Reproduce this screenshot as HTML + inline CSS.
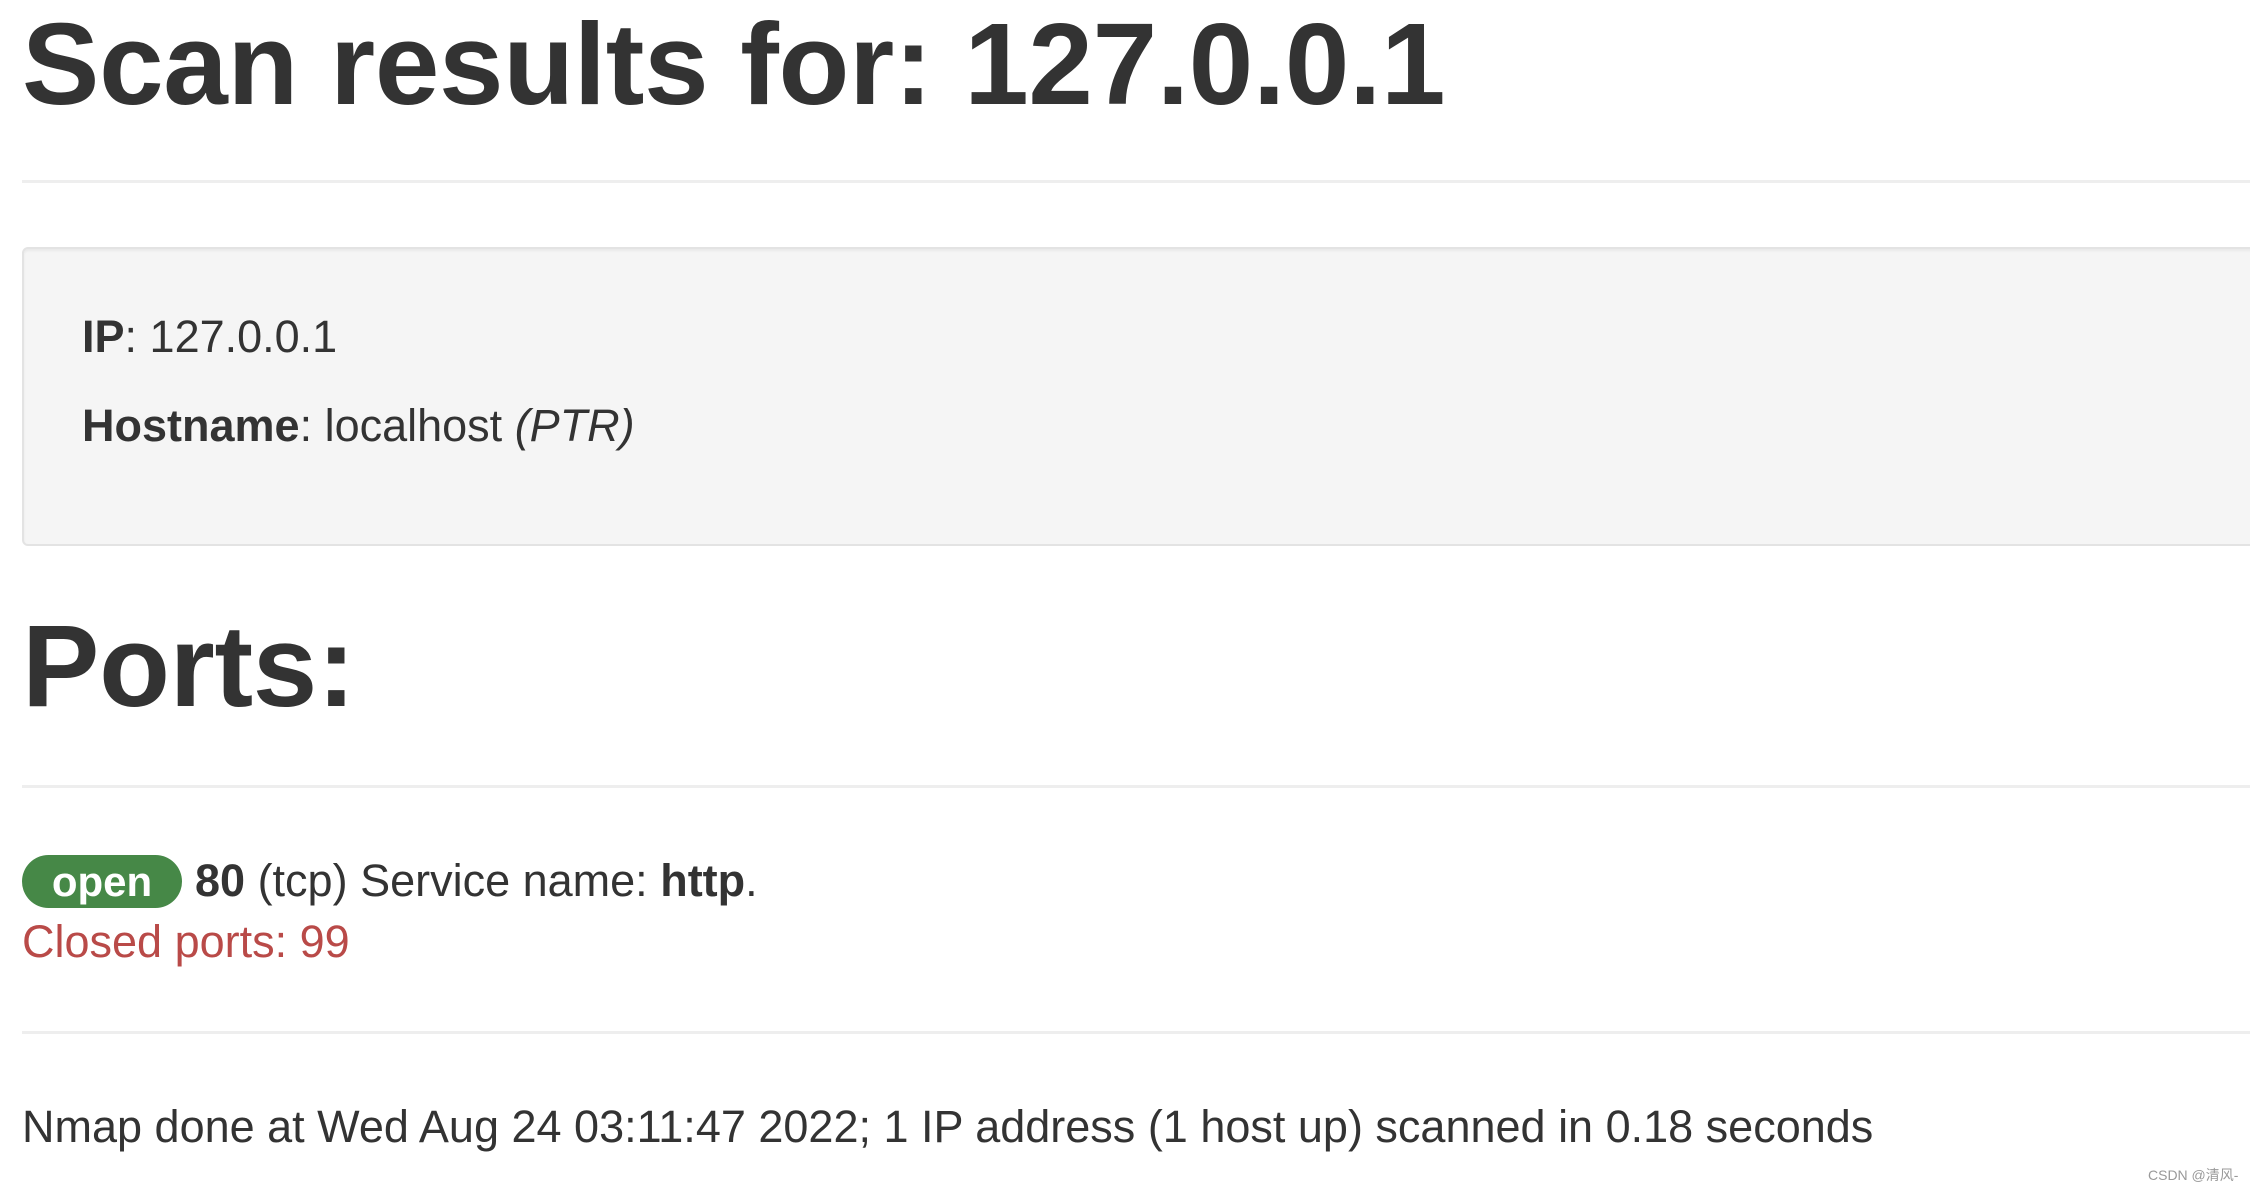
<!DOCTYPE html>
<html><head><meta charset="utf-8"><style>
html,body{margin:0;padding:0;background:#fff;width:2250px;height:1193px;overflow:hidden;position:relative;font-family:"Liberation Sans",Arial,sans-serif;color:#333}
.a{position:absolute;white-space:nowrap;line-height:1}
h1{margin:0;font-weight:bold;font-size:116px;letter-spacing:-0.3px}
.hr{position:absolute;left:22px;right:0;height:3px;background:#eee}
.well{position:absolute;left:22px;top:247px;width:2240px;height:295px;background:#f5f5f5;border:2px solid #e3e3e3;border-radius:6px;box-shadow:inset 0 2px 2px rgba(0,0,0,.05)}
.t{font-size:45px}
.badge{position:absolute;left:22px;top:855px;width:160px;height:53px;border-radius:27px;background:#468847;color:#fff;font-weight:bold;font-size:42px;text-align:center;line-height:53px}
</style></head><body>
<h1 class="a" style="left:22px;top:6px">Scan results for: 127.0.0.1</h1>
<div class="hr" style="top:180px"></div>
<div class="well"></div>
<div class="a t" style="left:82px;top:314px"><b>IP</b>: 127.0.0.1</div>
<div class="a t" style="left:82px;top:403px"><b>Hostname</b>: localhost <i>(PTR)</i></div>
<h1 class="a" style="left:22px;top:608px">Ports:</h1>
<div class="hr" style="top:785px"></div>
<div class="badge">open</div>
<div class="a t" style="left:195px;top:858px"><b>80</b> (tcp) Service name: <b>http</b>.</div>
<div class="a t" style="left:22px;top:919px;color:#b94a48">Closed ports: 99</div>
<div class="hr" style="top:1031px"></div>
<div class="a t" style="left:22px;top:1104px">Nmap done at Wed Aug 24 03:11:47 2022; 1 IP address (1 host up) scanned in 0.18 seconds</div>
<div class="a" style="left:2148px;top:1168px;font-size:14px;color:#999;font-family:'Liberation Sans','Noto Sans CJK SC',sans-serif">CSDN @清风-</div>
</body></html>
